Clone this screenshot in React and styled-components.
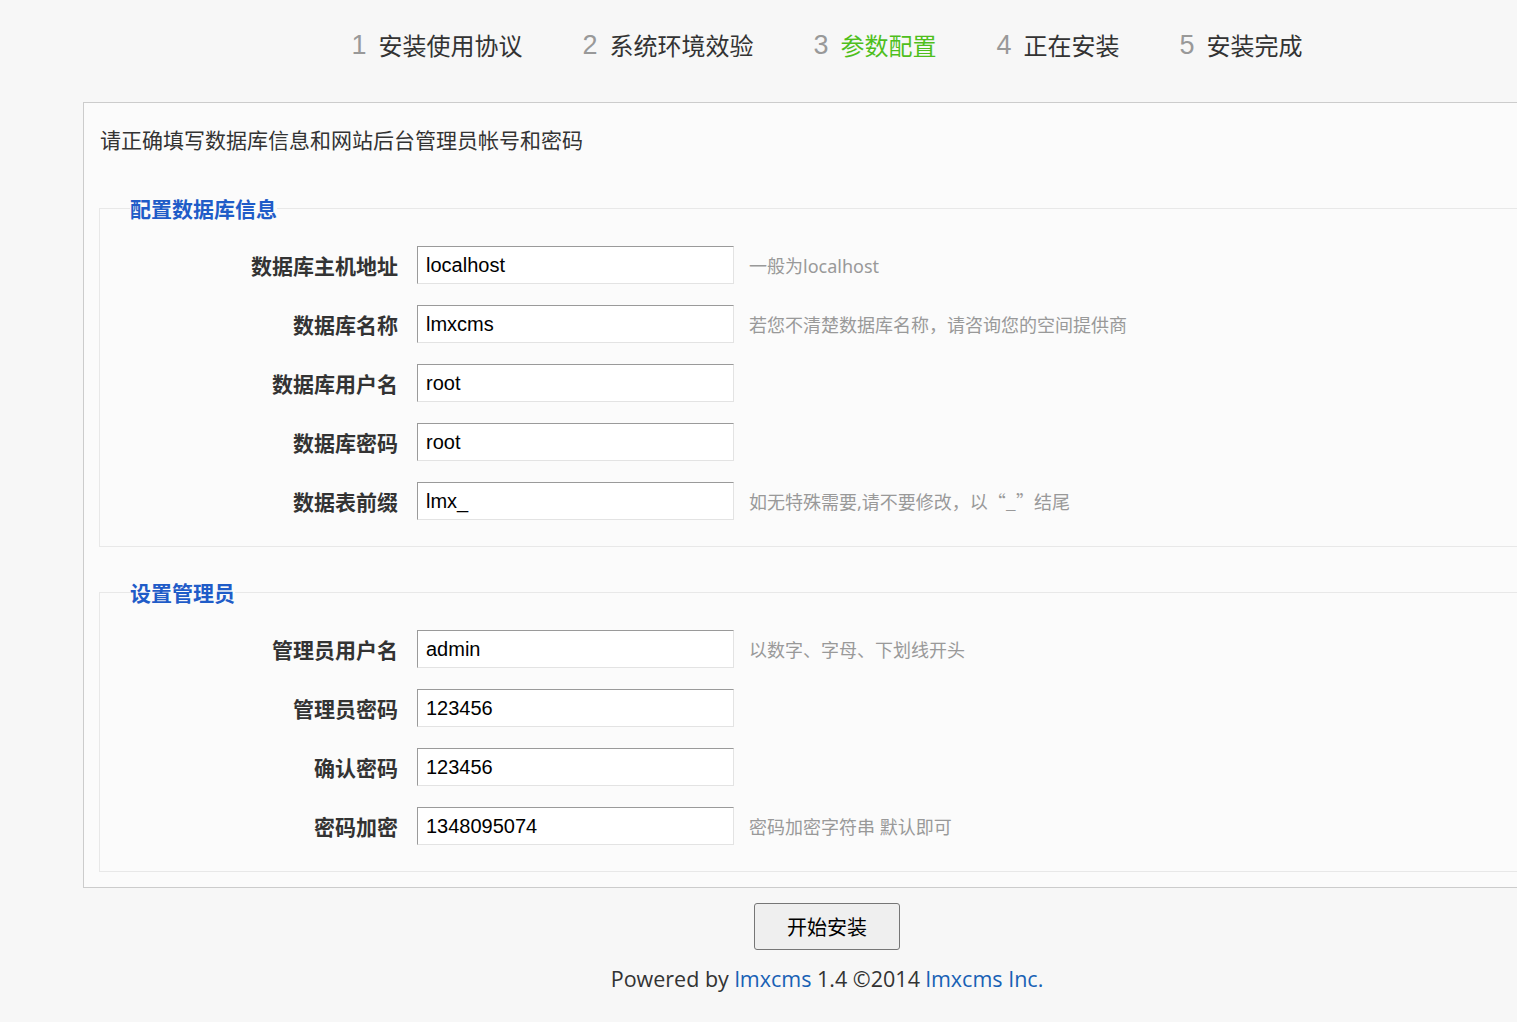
import React, { useEffect, useRef } from "react";
import styled, { createGlobalStyle } from "styled-components";

const GlobalStyle = createGlobalStyle`
  html, body {
    margin: 0;
    padding: 0;
    background: #f7f7f7;
    overflow-x: hidden;
  }
  body {
    font-family: "Noto Sans", "Noto Sans CJK SC", sans-serif;
    color: #333;
  }
`;

const Wrap = styled.div`
  margin-left: 83px;
  width: 1488px;
`;

const Steps = styled.ul`
  list-style: none;
  margin: 0;
  padding: 30px 0 42px;
  display: flex;
  justify-content: center;
  gap: 60px;
  height: 30px;
`;

const Step = styled.li`
  display: flex;
  align-items: center;
  gap: 12px;
  font-size: 24px;
  line-height: 30px;
  color: ${(p) => (p.$active ? "#4fbf1c" : "#333")};
  font-family: "Noto Sans CJK SC", sans-serif;
`;

const StepNum = styled.span`
  font-family: "Liberation Sans", Arial, sans-serif;
  color: #999;
  font-size: 27px;
`;

const Panel = styled.div`
  background: #fbfbfb;
  border: 1px solid #ccc;
  border-right: none;
  padding: 22px 15px 15px;
`;

const Intro = styled.p`
  margin: 0 0 41px 1px;
  font-size: 21px;
  line-height: 28px;
  color: #333;
  font-family: "Noto Sans CJK SC", sans-serif;
`;

const Group = styled.fieldset`
  margin: 0 0 31px;
  padding: 24px 0 26px;
  border: 1px solid #e8e8e8;
  display: flex;
  flex-direction: column;
  gap: 21px;
  &:last-child {
    margin-bottom: 0;
  }
`;

const Legend = styled.legend`
  margin-left: 30px;
  padding: 0;
  font-size: 21px;
  line-height: 28px;
  font-weight: 700;
  color: #1f5cc8;
  font-family: "Noto Sans CJK SC", sans-serif;
`;

const Row = styled.div`
  display: flex;
  align-items: center;
  height: 38px;
`;

const Label = styled.label`
  width: 298px;
  margin-right: 19px;
  text-align: right;
  font-size: 21px;
  font-weight: 700;
  color: #333;
  font-family: "Noto Sans CJK SC", sans-serif;
`;

const Input = styled.input`
  box-sizing: border-box;
  width: 317px;
  height: 38px;
  padding: 0 8px;
  background: #fff;
  border: 1px solid #e3e3e3;
  border-top-color: #9a9a9a;
  border-left-color: #9a9a9a;
  font-family: "Liberation Sans", Arial, sans-serif;
  font-size: 20px;
  color: #000;
  outline: none;
  caret-color: #000;
`;

const Hint = styled.span`
  margin-left: 15px;
  font-size: 18px;
  color: #999;
  font-family: "Noto Sans", "Noto Sans CJK SC", sans-serif;
`;

const Quote = styled.span`
  font-family: "Noto Sans CJK SC", sans-serif;
`;

const Actions = styled.div`
  display: flex;
  justify-content: center;
  padding-top: 15px;
`;

const Button = styled.button`
  width: 146px;
  height: 47px;
  background: #efefef;
  border: 1px solid #767676;
  border-radius: 3px;
  font-size: 20px;
  color: #000;
  font-family: "Noto Sans CJK SC", sans-serif;
  cursor: pointer;
`;

const Footer = styled.p`
  margin: 14px 0 0;
  text-align: center;
  font-size: 21.5px;
  line-height: 30px;
  color: #333;
  font-family: "Open Sans", "Noto Sans", sans-serif;
  a {
    color: #1861b5;
    text-decoration: none;
  }
`;

const steps = ["安装使用协议", "系统环境效验", "参数配置", "正在安装", "安装完成"];

const dbFields = [
  { label: "数据库主机地址", value: "localhost", hint: "一般为localhost" },
  { label: "数据库名称", value: "lmxcms", hint: "若您不清楚数据库名称，请咨询您的空间提供商" },
  { label: "数据库用户名", value: "root" },
  { label: "数据库密码", value: "root" },
  {
    label: "数据表前缀",
    value: "lmx_",
    hint: (
      <>
        如无特殊需要,请不要修改，以<Quote>“_”</Quote>结尾
      </>
    ),
  },
];

const adminFields = [
  { label: "管理员用户名", value: "admin", hint: "以数字、字母、下划线开头" },
  { label: "管理员密码", value: "123456" },
  { label: "确认密码", value: "123456", focus: true },
  { label: "密码加密", value: "1348095074", hint: "密码加密字符串 默认即可" },
];

function Field({ label, value, hint, focus }) {
  const ref = useRef(null);
  useEffect(() => {
    if (focus && ref.current) {
      ref.current.focus();
      ref.current.setSelectionRange(3, 3);
    }
  }, [focus]);
  return (
    <Row>
      <Label>{label}</Label>
      <Input ref={ref} defaultValue={value} />
      {hint && <Hint>{hint}</Hint>}
    </Row>
  );
}

export default function App() {
  return (
    <>
      <GlobalStyle />
      <Wrap>
        <Steps>
          {steps.map((s, i) => (
            <Step key={s} $active={i === 2}>
              <StepNum>{i + 1}</StepNum>
              {s}
            </Step>
          ))}
        </Steps>
        <Panel>
          <Intro>请正确填写数据库信息和网站后台管理员帐号和密码</Intro>
          <Group>
            <Legend>配置数据库信息</Legend>
            {dbFields.map((f) => (
              <Field key={f.label} {...f} />
            ))}
          </Group>
          <Group>
            <Legend>设置管理员</Legend>
            {adminFields.map((f) => (
              <Field key={f.label} {...f} />
            ))}
          </Group>
        </Panel>
        <Actions>
          <Button>开始安装</Button>
        </Actions>
        <Footer>
          Powered by <a href="#">lmxcms</a> 1.4 ©2014 <a href="#">lmxcms Inc.</a>
        </Footer>
      </Wrap>
    </>
  );
}
